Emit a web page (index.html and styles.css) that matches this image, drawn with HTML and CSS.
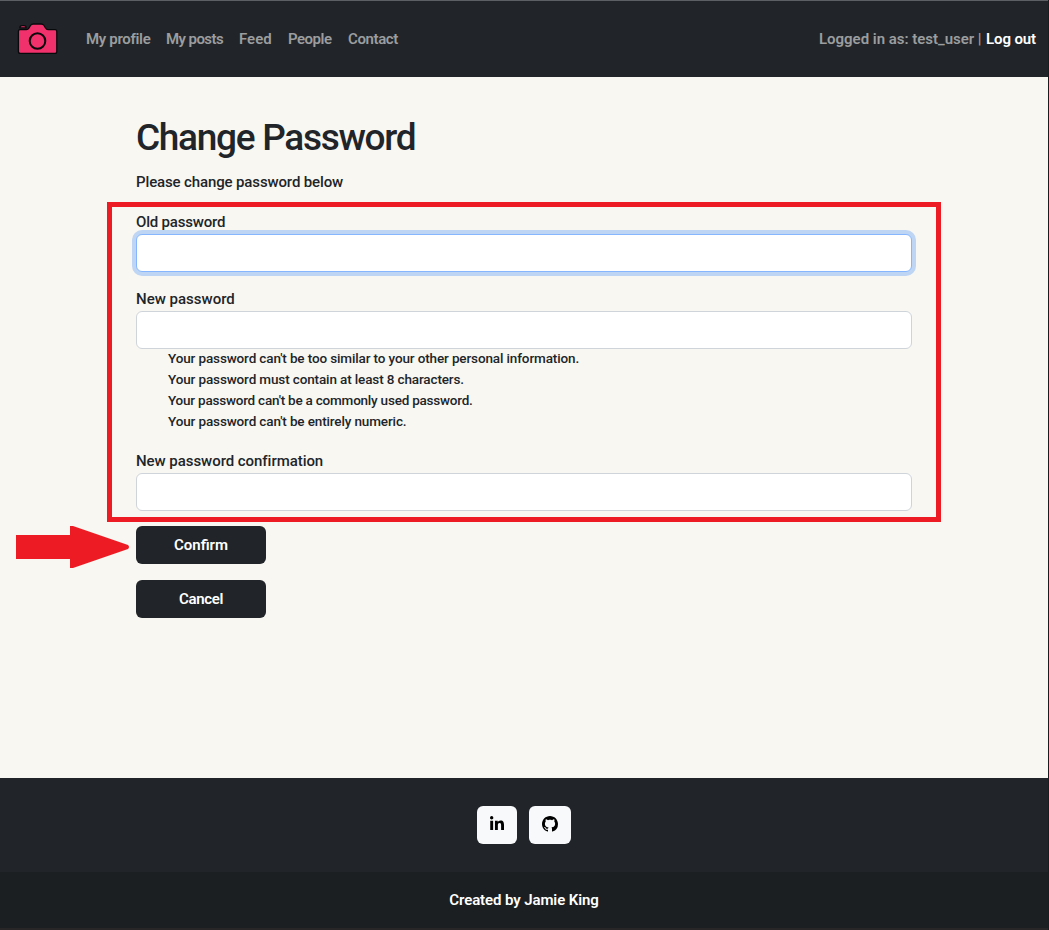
FILE: index.html
```html
<!DOCTYPE html>
<html lang="en">
<head>
<meta charset="utf-8">
<title>Change Password</title>
<link rel="stylesheet" href="styles.css">
</head>
<body>
<header class="navbar">
  <a class="brand" href="#" aria-label="Home">
    <svg class="camera" viewBox="0 0 42 32" width="42" height="32">
      <g fill="#f1316b" stroke="#08090b" stroke-width="1.3">
        <path d="M2.8 4.9Q2.8 2.6 5 2.6H7Q9.2 2.6 9.2 4.9Z" stroke-width="1.2"/>
        <path d="M3 6.7H9.5Q11 6.7 12 5L13.5 2.5Q14.4 1 16.2 1H24.2Q26 1 27 2.5L28.5 5Q29.5 6.7 31 6.7H38Q39.8 6.7 39.8 8.6V28.4Q39.8 30.3 38 30.3H3.3Q1.4 30.3 1.4 28.4V8.6Q1.4 6.7 3 6.7Z"/>
        <circle cx="20.5" cy="18" r="7.8" stroke-width="2"/>
      </g>
    </svg>
  </a>
  <nav class="links">
    <a class="l-profile" href="#">My profile</a>
    <a class="l-posts" href="#">My posts</a>
    <a class="l-feed" href="#">Feed</a>
    <a class="l-people" href="#">People</a>
    <a class="l-contact" href="#">Contact</a>
  </nav>
  <div class="account"><span class="user">Logged in as: test_user |</span><a class="logout" href="#">Log out</a></div>
</header>
<main class="content">
  <h1>Change Password</h1>
  <p class="intro">Please change password below</p>
  <form class="form">
    <div class="field">
      <label class="label-old" for="old">Old password</label>
      <input class="focused" id="old" type="password">
    </div>
    <div class="field">
      <label for="new1">New password</label>
      <input id="new1" type="password">
      <ul class="help">
        <li>Your password can't be too similar to your other personal information.</li>
        <li>Your password must contain at least 8 characters.</li>
        <li class="tight">Your password can't be a commonly used password.</li>
        <li>Your password can't be entirely numeric.</li>
      </ul>
    </div>
    <div class="field">
      <label class="label-confirm" for="new2">New password confirmation</label>
      <input id="new2" type="password">
    </div>
    <div class="actions">
      <button type="button" class="btn">Confirm</button>
      <button type="button" class="btn btn-cancel">Cancel</button>
    </div>
  </form>
</main>
<footer class="footer">
  <div class="social">
    <a class="icon-btn linkedin" href="#" aria-label="LinkedIn">
      <svg viewBox="0 0 448 512" width="14" height="16"><path d="M100.3 448H7.4V148.9h92.9zM53.8 108.1C24.1 108.1 0 83.5 0 53.8a53.8 53.8 0 0 1 107.6 0c0 29.7-24.1 54.3-53.8 54.3zM447.9 448h-92.7V302.4c0-34.7-.7-79.2-48.3-79.2-48.3 0-55.7 37.7-55.7 76.7V448h-92.8V148.9h89.1v40.8h1.3c12.4-23.5 42.7-48.3 87.9-48.3 94 0 111.3 61.9 111.3 142.3V448z"/></svg>
    </a>
    <a class="icon-btn github" href="#" aria-label="GitHub">
      <svg viewBox="0 0 16 16" width="16" height="16"><path d="M8 0C3.58 0 0 3.58 0 8c0 3.54 2.29 6.53 5.47 7.59.4.07.55-.17.55-.38 0-.19-.01-.82-.01-1.49-2.01.37-2.53-.49-2.69-.94-.09-.23-.48-.94-.82-1.13-.28-.15-.68-.52-.01-.53.63-.01 1.08.58 1.23.82.72 1.21 1.87.87 2.33.66.07-.52.28-.87.51-1.07-1.78-.2-3.64-.89-3.64-3.95 0-.87.31-1.59.82-2.15-.08-.2-.36-1.02.08-2.12 0 0 .67-.21 2.2.82.64-.18 1.32-.27 2-.27s1.36.09 2 .27c1.53-1.04 2.2-.82 2.2-.82.44 1.1.16 1.92.08 2.12.51.56.82 1.27.82 2.15 0 3.07-1.87 3.75-3.65 3.95.29.25.54.73.54 1.48 0 1.07-.01 1.93-.01 2.2 0 .21.15.46.55.38A8.01 8.01 0 0 0 16 8c0-4.42-3.58-8-8-8Z"/></svg>
    </a>
  </div>
  <div class="credit">Created by Jamie King</div>
</footer>
<div class="highlight"></div>
<svg class="arrow" viewBox="0 0 114 42" width="114" height="42"><path fill="#ed1c24" d="M0 9H54V0H57L112 19Q114 21 112 23L57 42H54V33H0Z"/></svg>
<div class="edge"></div>
</body>
</html>
```
FILE: styles.css
```css
* { box-sizing: border-box; }
body {
  margin: 0;
  position: relative;
  height: 930px;
  overflow: hidden;
  display: flex;
  flex-direction: column;
  background: #f9f7f2;
  color: #212529;
  font: 500 15px/24px Roboto, "Liberation Sans", sans-serif;
}
a { color: inherit; text-decoration: none; white-space: nowrap; }
.navbar {
  height: 77px;
  flex: none;
  display: flex;
  align-items: center;
  padding: 0 13px 0 17px;
  background: #212529;
  border-top: 1px solid #5c6064;
  color: #9b9d9f;
  font-weight: 600;
}
.brand { display: flex; margin-right: 27px; }
.links { display: flex; gap: 16px; padding-bottom: 1px; }
.l-profile { width: 64px; letter-spacing: -.32px; }
.l-posts { width: 57px; letter-spacing: -.58px; }
.l-feed { width: 33px; }
.l-people { width: 44px; letter-spacing: -.5px; }
.l-contact { width: 51px; letter-spacing: -.38px; }
.account { margin-left: auto; display: flex; white-space: nowrap; gap: 4px; padding-bottom: 1px; }
.user { width: 163px; letter-spacing: -.02px; }
.logout { color: #fff; width: 50px; letter-spacing: -.1px; }
.content { flex: 1; padding: 37px 137px 0 136px; }
h1 { margin: 0 0 8px; font-size: 37px; line-height: 48px; font-weight: 500; white-space: nowrap; letter-spacing: -1.3px; }
.intro { margin: 0 0 16px; letter-spacing: -.13px; }
.form { display: flex; flex-direction: column; }
.field { display: flex; flex-direction: column; margin-bottom: 15px; }
.field label { align-self: flex-start; white-space: nowrap; }
.field .label-old { letter-spacing: -.2px; }
.field .label-confirm { letter-spacing: -.05px; }
.field input {
  height: 38px;
  width: 776px;
  border: 1px solid #ced4da;
  border-radius: 6px;
  background: #fff;
  outline: none;
}
.field input.focused { border-color: #86b7fe; box-shadow: 0 0 0 4px #bed5f4; }
.help { margin: -1px 0 2px; padding: 0 0 0 32px; list-style: none; font-size: 13.5px; line-height: 21px; letter-spacing: -.13px; }
.help li { width: max-content; }
.help .tight { letter-spacing: -.22px; }
.actions { display: flex; flex-direction: column; gap: 16px; }
.btn {
  width: 130px;
  height: 38px;
  padding: 0;
  border: 0;
  border-radius: 6px;
  background: #212529;
  color: #fff;
  font: inherit;
  font-weight: 600;
}
.btn-cancel { letter-spacing: -.35px; }
.footer { flex: none; height: 152px; background: #212529; color: #fff; }
.social { height: 94px; display: flex; justify-content: center; align-items: center; gap: 12px; padding-right: 1px; }
.icon-btn { width: 40px; height: 38px; border-radius: 6px; background: #f8f9fa; display: flex; align-items: center; justify-content: center; }
.icon-btn svg { display: block; fill: #000; margin-bottom: 2px; }
.github { width: 42px; }
.credit { height: 58px; padding: 16px 1px 0 0; background: #1b1f22; border-bottom: 2px solid #292628; text-align: center; font-weight: 600; letter-spacing: -.1px; }
.highlight { position: absolute; left: 107px; top: 202px; width: 834px; height: 320px; border: 5px solid #ed1c24; pointer-events: none; }
.arrow { position: absolute; left: 16px; top: 526px; }
.edge { position: absolute; right: 0; top: 0; width: 1px; height: 930px; background: #1a1d20; }
```
